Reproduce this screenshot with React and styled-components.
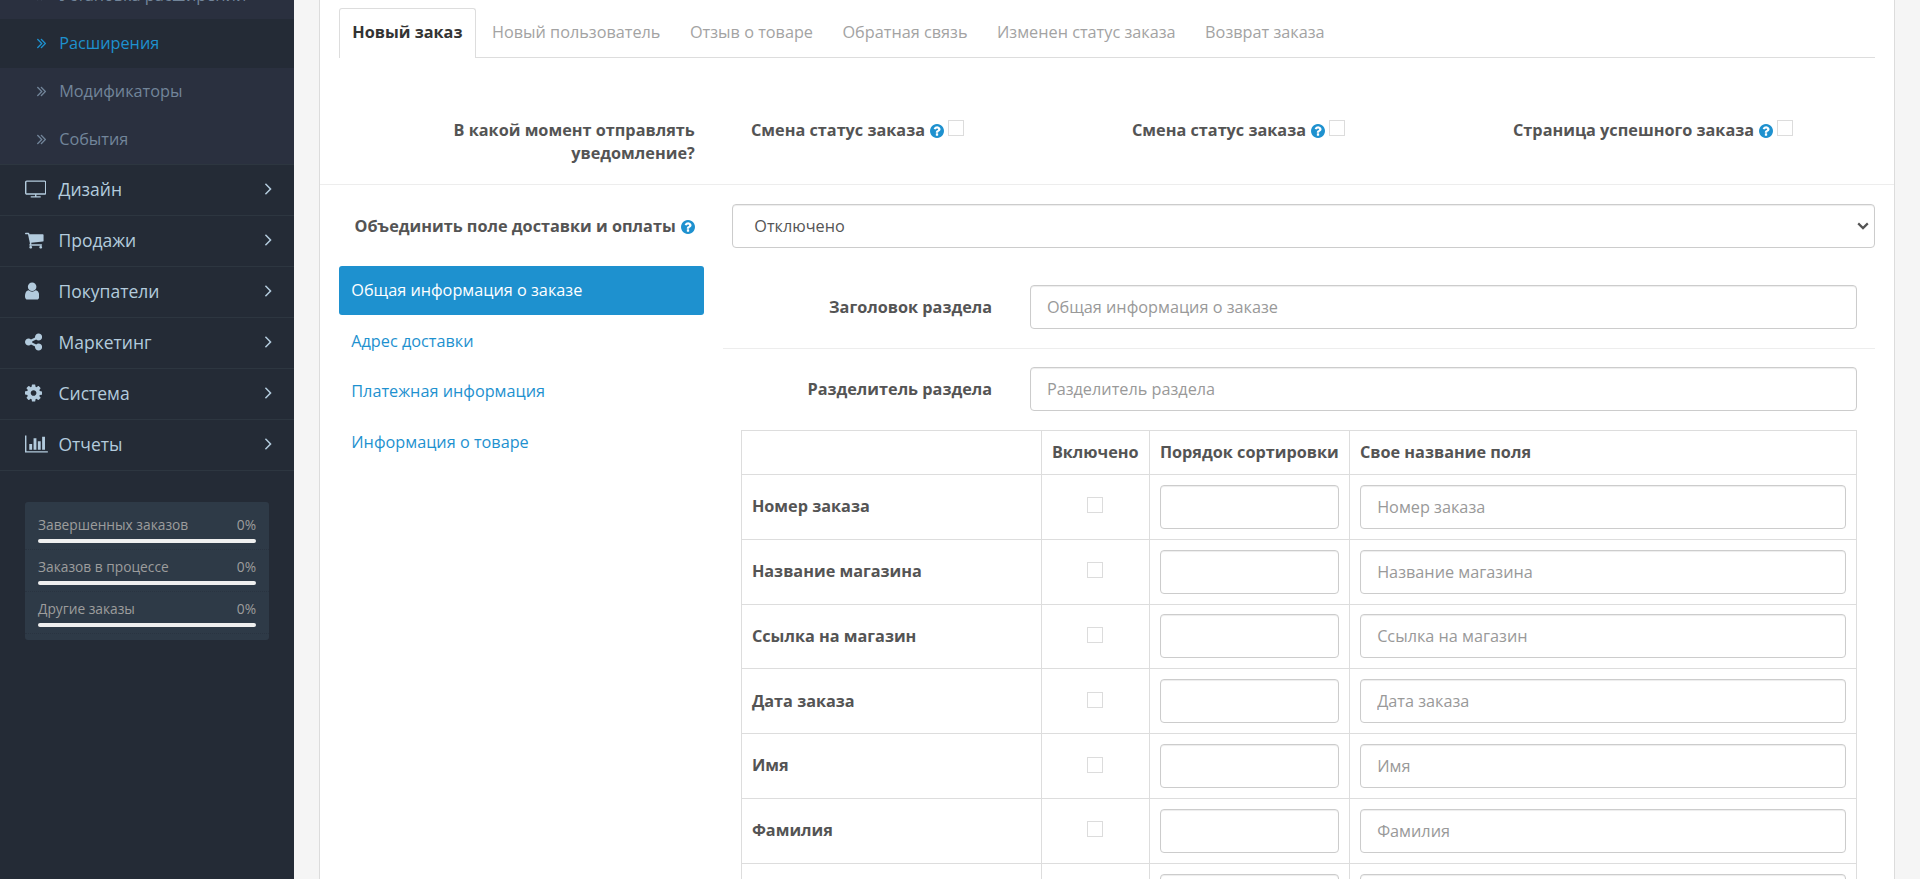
import React from "react";
import styled, { createGlobalStyle } from "styled-components";

const icons = {
  tv: {
    box: "0 0 1920 1792",
    d: "M1792 1248v-960q0-13-9.5-22.5t-22.5-9.5h-1600q-13 0-22.5 9.5t-9.5 22.5v960q0 13 9.5 22.5t22.5 9.5h1600q13 0 22.5-9.5t9.5-22.5zm128-960v960q0 66-47 113t-113 47h-736v128h352q14 0 23 9t9 23v64q0 14-9 23t-23 9h-832q-14 0-23-9t-9-23v-64q0-14 9-23t23-9h352v-128h-736q-66 0-113-47t-47-113v-960q0-66 47-113t113-47h1600q66 0 113 47t47 113z",
  },
  cart: {
    box: "64 0 1664 1792",
    d: "M704 1536q0 52-38 90t-90 38-90-38-38-90 38-90 90-38 90 38 38 90zm896 0q0 52-38 90t-90 38-90-38-38-90 38-90 90-38 90 38 38 90zm128-1088v512q0 24-16.5 42.5t-40.5 21.5l-1044 122q13 60 13 70 0 16-24 64h920q26 0 45 19t19 45-19 45-45 19h-1024q-26 0-45-19t-19-45q0-11 8-31.5t16-36 21.5-40 15.5-29.5l-177-823h-204q-26 0-45-19t-19-45 19-45 45-19h256q16 0 28.5 6.5t19.5 15.5 13 24.5 8 26 5.5 29.5 4.5 26h1201q26 0 45 19t19 45z",
  },
  user: {
    box: "256 0 1280 1792",
    d: "M1536 1399q0 109-62.5 187t-150.5 78h-854q-88 0-150.5-78t-62.5-187q0-85 8.5-160.5t31.5-152 58.5-131 94-89 134.5-34.5q131 128 313 128t313-128q76 0 134.5 34.5t94 89 58.5 131 31.5 152 8.5 160.5zm-256-887q0 159-112.5 271.5t-271.5 112.5-271.5-112.5-112.5-271.5 112.5-271.5 271.5-112.5 271.5 112.5 112.5 271.5z",
  },
  share: {
    box: "128 0 1536 1792",
    d: "M1344 1024q133 0 226.5 93.5t93.5 226.5-93.5 226.5-226.5 93.5-226.5-93.5-93.5-226.5q0-12 2-34l-360-180q-92 86-218 86-133 0-226.5-93.5t-93.5-226.5 93.5-226.5 226.5-93.5q126 0 218 86l360-180q-2-22-2-34 0-133 93.5-226.5t226.5-93.5 226.5 93.5 93.5 226.5-93.5 226.5-226.5 93.5q-126 0-218-86l-360 180q2 22 2 34t-2 34l360 180q92-86 218-86z",
  },
  cog: {
    box: "128 0 1536 1792",
    d: "M1152 896q0-106-75-181t-181-75-181 75-75 181 75 181 181 75 181-75 75-181zm512-109v222q0 12-8 23t-20 13l-185 28q-19 54-39 91 35 50 107 138 10 12 10 25t-9 23q-27 37-99 108t-94 71q-12 0-26-9l-138-108q-44 23-91 38-16 136-29 186-7 28-36 28h-222q-14 0-24.5-8.5t-11.5-21.5l-28-184q-49-16-90-37l-141 107q-10 9-25 9-14 0-25-11-126-114-165-168-7-10-7-23 0-12 8-23 15-21 51-66.5t54-70.5q-27-50-41-99l-183-27q-13-2-21-12.5t-8-23.5v-222q0-12 8-23t19-13l186-28q14-46 39-92-40-57-107-138-10-12-10-24 0-10 9-23 26-36 98.5-107.5t94.5-71.5q13 0 26 10l138 107q44-23 91-38 16-136 29-186 7-28 36-28h222q14 0 24.5 8.5t11.5 21.5l28 184q49 16 90 37l142-107q9-9 24-9 13 0 25 10 129 119 165 170 7 8 7 22 0 12-8 23-15 21-51 66.5t-54 70.5q26 50 41 98l183 28q13 2 21 12.5t8 23.5z",
  },
  chart: {
    box: "0 0 2048 1792",
    d: "M640 896v512h-256v-512h256zm384-512v1024h-256v-1024h256zm1024 1152v128h-2048v-1536h128v1408h1920zm-640-896v768h-256v-768h256zm384-384v1152h-256v-1152h256z",
  },
  angle: {
    box: "589 64 582 1792",
    d: "M1171 960q0 13-10 23l-466 466q-10 10-23 10t-23-10l-50-50q-10-10-10-23t10-23l393-393-393-393q-10-10-10-23t10-23l50-50q10-10 23-10t23 10l466 466q10 10 10 23z",
  },
  doubleAngle: {
    box: "397 64 966 1792",
    d: "M979 960q0 13-10 23l-466 466q-10 10-23 10t-23-10l-50-50q-10-10-10-23t10-23l393-393-393-393q-10-10-10-23t10-23l50-50q10-10 23-10t23 10l466 466q10 10 10 23zm384 0q0 13-10 23l-466 466q-10 10-23 10t-23-10l-50-50q-10-10-10-23t10-23l393-393-393-393q-10-10-10-23t10-23l50-50q10-10 23-10t23 10l466 466q10 10 10 23z",
  },
  question: {
    box: "128 128 1536 1536",
    d: "M1024 1376v-192q0-14-9-23t-23-9h-192q-14 0-23 9t-9 23v192q0 14 9 23t23 9h192q14 0 23-9t9-23zm256-672q0-88-55.5-163t-138.5-116-170-41q-243 0-371 213-15 24 8 42l132 100q7 6 19 6 16 0 25-12 53-68 86-92 34-24 86-24 48 0 85.5 26t37.5 59q0 38-20 61t-68 45q-63 28-115.5 86.5t-52.5 125.5v36q0 14 9 23t23 9h192q14 0 23-9t9-23q0-19 21.5-49.5t54.5-49.5q32-18 49-28.5t46-35 44.5-48 28-60.5 12.5-81zm384 192q0 209-103 385.5t-279.5 279.5-385.5 103-385.5-103-279.5-279.5-103-385.5 103-385.5 279.5-279.5 385.5-103 385.5 103 279.5 279.5 103 385.5z",
  },
};

const subItems = ["Установка расширений", "Расширения", "Модификаторы", "События"];

const menuItems = [
  { icon: "tv", text: "Дизайн" },
  { icon: "cart", text: "Продажи" },
  { icon: "user", text: "Покупатели" },
  { icon: "share", text: "Маркетинг" },
  { icon: "cog", text: "Система" },
  { icon: "chart", text: "Отчеты" },
];

const stats = ["Завершенных заказов", "Заказов в процессе", "Другие заказы"];

const tabs = [
  "Новый заказ",
  "Новый пользователь",
  "Отзыв о товаре",
  "Обратная связь",
  "Изменен статус заказа",
  "Возврат заказа",
];

const moments = ["Смена статус заказа", "Смена статус заказа", "Страница успешного заказа"];

const sections = [
  "Общая информация о заказе",
  "Адрес доставки",
  "Платежная информация",
  "Информация о товаре",
];

const fields = [
  "Номер заказа",
  "Название магазина",
  "Ссылка на магазин",
  "Дата заказа",
  "Имя",
  "Фамилия",
  "",
];

const Icon = ({ name, size }) => (
  <Glyph viewBox={icons[name].box} $size={size}>
    <path d={icons[name].d} />
  </Glyph>
);

const Help = () => (
  <HelpIcon viewBox={icons.question.box}>
    <path d={icons.question.d} />
  </HelpIcon>
);

const Sidebar = () => (
  <Side>
    <SubMenu>
      {subItems.map((text) => (
        <SubItem key={text} $active={text === "Расширения"}>
          <Icon name="doubleAngle" size={17} />
          {text}
        </SubItem>
      ))}
    </SubMenu>
    <Menu>
      {menuItems.map(({ icon, text }) => (
        <MenuItem key={text}>
          <MenuIcon>
            <Icon name={icon} size={20} />
          </MenuIcon>
          <MenuText>{text}</MenuText>
          <Icon name="angle" size={20} />
        </MenuItem>
      ))}
    </Menu>
    <Stats>
      {stats.map((text) => (
        <Stat key={text}>
          <StatText>
            <span>{text}</span>
            <span>0%</span>
          </StatText>
          <Bar />
        </Stat>
      ))}
    </Stats>
  </Side>
);

const FieldsTable = () => (
  <Table>
    <HeadRow>
      <Cell />
      <Cell>Включено</Cell>
      <Cell>Порядок сортировки</Cell>
      <Cell>Свое название поля</Cell>
    </HeadRow>
    {fields.map((field) => (
      <Row key={field}>
        <Cell>{field}</Cell>
        <CheckCell>
          <Checkbox type="checkbox" />
        </CheckCell>
        <Cell>
          <Input />
        </Cell>
        <Cell>
          <Input placeholder={field} />
        </Cell>
      </Row>
    ))}
  </Table>
);

const App = () => {
  return (
    <Page>
      <GlobalStyle />
      <Sidebar />
      <Panel>
        <Tabs>
          {tabs.map((tab, i) => (
            <Tab key={tab} $active={i === 0}>
              {tab}
            </Tab>
          ))}
        </Tabs>
        <MomentRow>
          <Label>В какой момент отправлять уведомление?</Label>
          <Moments>
            {moments.map((text, i) => (
              <Moment key={i}>
                {text} <Help />
                <Checkbox type="checkbox" />
              </Moment>
            ))}
          </Moments>
        </MomentRow>
        <MergeRow>
          <Label>
            Объединить поле доставки и оплаты <Help />
          </Label>
          <SelectWrapper>
            <Select>
              <option>Отключено</option>
            </Select>
            <Chevron viewBox="0 0 12 8">
              <path d="M1.2 1.4 6 6.1l4.8-4.7" />
            </Chevron>
          </SelectWrapper>
        </MergeRow>
        <Content>
          <Pills>
            {sections.map((section, i) => (
              <Pill key={section} $active={i === 0}>
                {section}
              </Pill>
            ))}
          </Pills>
          <Section>
            <SectionRow>
              <Label>Заголовок раздела</Label>
              <Input placeholder="Общая информация о заказе" />
            </SectionRow>
            <SectionRow $line>
              <Label>Разделитель раздела</Label>
              <Input placeholder="Разделитель раздела" />
            </SectionRow>
            <FieldsTable />
          </Section>
        </Content>
      </Panel>
    </Page>
  );
};

export default App;

const GlobalStyle = createGlobalStyle`
  * {
    box-sizing: border-box;
  }

  body {
    margin: 0;
    overflow: hidden;
    background: #f5f5f5;
    color: #545454;
    font: 400 16.25px/23.2px "Open Sans", "Noto Sans", sans-serif;
  }

  input,
  select {
    font: inherit;
  }
`;

const Page = styled.div`
  display: grid;
  grid-template-columns: 294px 1fr;
  height: 879px;
  overflow: hidden;
`;

const Glyph = styled.svg`
  height: ${({ $size }) => $size}px;
  flex-shrink: 0;
  fill: currentColor;
`;

const HelpIcon = styled.svg`
  width: 14px;
  height: 14px;
  margin-left: 0.8px;
  fill: #1e91cf;
  vertical-align: -2px;
`;

/* sidebar */

const Side = styled.div`
  background: #242b36;
  overflow: hidden;
`;

const SubMenu = styled.div`
  display: grid;
  grid-template-rows: repeat(4, 48.2px);
  margin-top: -28.8px;
  background: #2a303f;
`;

const SubItem = styled.div`
  display: flex;
  align-items: center;
  gap: 13px;
  padding-left: 37px;
  color: ${({ $active }) => ($active ? "#1e91cf" : "#72859a")};
  background: ${({ $active }) => ($active ? "#242b36" : "none")};
`;

const Menu = styled.div`
  border-bottom: 1px solid #2d3640;
`;

const MenuItem = styled.div`
  display: flex;
  align-items: center;
  height: 51px;
  padding: 0 22.5px 1px 25px;
  border-top: 1px solid #2d3640;
  color: #b3cbdd;
  font-size: 17.5px;
`;

const MenuIcon = styled.div`
  display: flex;
  width: 33.5px;
`;

const MenuText = styled.div`
  flex: 1;
`;

const Stats = styled.div`
  height: 138px;
  margin: 31px 25px 0;
  padding-top: 6px;
  border-radius: 3px;
  background: #2e3a47;
  color: #9d9d9d;
  font-size: 13.75px;
`;

const Stat = styled.div`
  height: 42px;
  padding: 7px 13px 0;
  border-bottom: 1px dotted #293340;
`;

const StatText = styled.div`
  display: flex;
  justify-content: space-between;
  line-height: 20px;
`;

const Bar = styled.div`
  height: 4px;
  margin-top: 4px;
  border-radius: 2px;
  background: #efefef;
`;

/* panel */

const Panel = styled.div`
  margin: 0 25px;
  padding: 8px 18.75px 0;
  border: 1px solid #dcdcdc;
  border-width: 0 1px;
  background: #fff;
`;

const Tabs = styled.div`
  display: flex;
  gap: 2.5px;
  height: 50px;
  border-bottom: 1px solid #ddd;
`;

const Tab = styled.div`
  height: 50px;
  padding: 12px 12.5px;
  border: 1px solid ${({ $active }) => ($active ? "#ddd" : "transparent")};
  border-bottom: 0;
  border-radius: 3px 3px 0 0;
  background: ${({ $active }) => ($active ? "#fff" : "none")};
  color: ${({ $active }) => ($active ? "#333" : "#a3a3a3")};
  font-weight: ${({ $active }) => ($active ? 700 : 400)};
`;

const Label = styled.div`
  padding: 0 18.75px;
  font-weight: 700;
  text-align: right;
`;

const MomentRow = styled.div`
  display: grid;
  grid-template-columns: 25% 75%;
  height: 127px;
  margin: 0 -18.75px;
  padding-top: 61px;
  border-bottom: 1px solid #ededed;
`;

const Moments = styled.div`
  display: grid;
  grid-template-columns: repeat(3, 1fr);
  padding: 0 18.75px;
`;

const Moment = styled.div`
  padding-left: 18.75px;
  font-weight: 700;
`;

const Checkbox = styled.input`
  appearance: none;
  width: 16px;
  height: 16px;
  margin: 0 0 0 4px;
  border: 1px solid #dcdcdc;
  background: #fff;
  vertical-align: 0;
`;

const MergeRow = styled.div`
  display: grid;
  grid-template-columns: 25% 75%;
  height: 81px;
  margin: 0 -18.75px;
  padding-top: 19px;

  ${Label} {
    padding-top: 11px;
  }
`;

const SelectWrapper = styled.div`
  display: grid;
  height: 44px;
  padding: 0 18.75px;
`;

const Select = styled.select`
  grid-area: 1 / 1;
  appearance: none;
  padding: 2px 21px 0;
  border: 1px solid #ccc;
  border-radius: 4px;
  background: #fff;
  box-shadow: inset 0 1px 1px rgba(0, 0, 0, 0.075);
  color: #555;
`;

const Chevron = styled.svg`
  grid-area: 1 / 1;
  place-self: center end;
  width: 12px;
  height: 8px;
  margin-right: 6px;
  fill: none;
  stroke: #545454;
  stroke-width: 2.2;
  pointer-events: none;
`;

const Content = styled.div`
  display: grid;
  grid-template-columns: 25% 75%;
`;

const Pills = styled.div`
  display: flex;
  flex-direction: column;
  gap: 2px;
  padding-right: 18.75px;
`;

const Pill = styled.div`
  height: 48.8px;
  padding: 12.8px 12.5px 0;
  border-radius: 3px;
  background: ${({ $active }) => ($active ? "#1e91cf" : "none")};
  color: ${({ $active }) => ($active ? "#fff" : "#1e91cf")};
`;

const Section = styled.div`
  padding-top: 1px;
`;

const SectionRow = styled.div`
  display: grid;
  grid-template-columns: 288px 1fr;
  padding: 18px 18.75px 19px 0;
  border-top: ${({ $line }) => ($line ? "1px solid #ededed" : 0)};

  ${Label} {
    padding-top: 11px;
  }

  > input {
    width: auto;
    margin-left: 18.75px;
  }
`;

const Input = styled.input`
  width: 100%;
  height: 44px;
  padding: 0 16.25px;
  border: 1px solid #ccc;
  border-radius: 4px;
  background: #fff;
  box-shadow: inset 0 1px 1px rgba(0, 0, 0, 0.075);
  color: #555;

  &::placeholder {
    color: #999;
    opacity: 1;
  }
`;

const Table = styled.div`
  margin: 0 18.75px 0 18px;
  border: 1px solid #ddd;
  border-width: 1px 0 0 1px;
`;

const Row = styled.div`
  display: grid;
  grid-template-columns: 300px 108px 200px 1fr;
  height: 64.8px;
`;

const HeadRow = styled(Row)`
  height: 44px;
`;

const Cell = styled.div`
  display: flex;
  align-items: center;
  padding: 0 10px;
  border: 1px solid #ddd;
  border-width: 0 1px 1px 0;
  font-weight: 700;

  input {
    font-weight: 400;
  }
`;

const CheckCell = styled(Cell)`
  justify-content: center;

  input {
    margin: 0 0 3px;
  }
`;
